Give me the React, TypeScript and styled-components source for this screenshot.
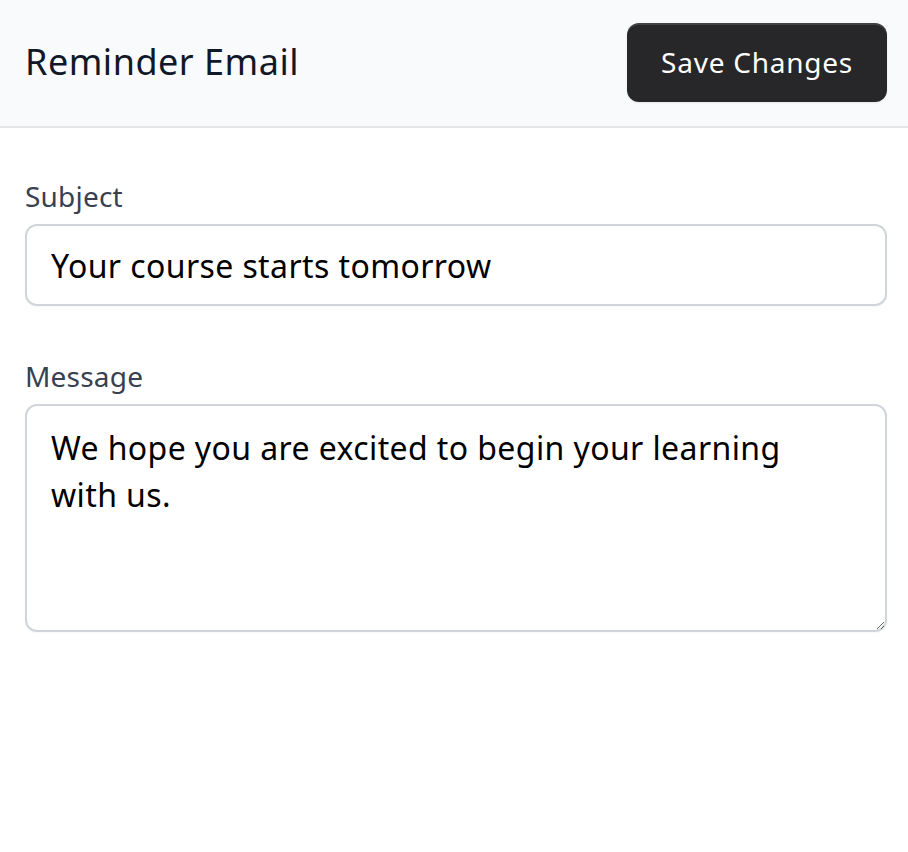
import React, { useState } from "react";
import styled, { createGlobalStyle } from "styled-components";

const GlobalStyle = createGlobalStyle`
  * {
    box-sizing: border-box;
  }

  body {
    margin: 0;
    background: #ffffff;
    font-family: "Noto Sans", "Open Sans", sans-serif;
  }
`;

const Page = styled.div`
  display: flex;
  flex-direction: column;
  width: 100%;
  min-height: 852px;
  background: #ffffff;
`;

const Header = styled.header`
  display: flex;
  align-items: center;
  justify-content: space-between;
  height: 128px;
  padding: 0 21px 2px 25px;
  background: #f9fafb;
  border-bottom: 2px solid #e5e7eb;
`;

const Title = styled.h1`
  margin: 0;
  font-size: 36px;
  font-weight: 400;
  line-height: 48px;
  letter-spacing: 0.5px;
  color: #111827;
`;

const SaveButton = styled.button`
  height: 79px;
  width: 260px;
  border: none;
  border-radius: 12px;
  background: #27272a;
  color: #ffffff;
  font-family: inherit;
  font-size: 28px;
  font-weight: 400;
  letter-spacing: 0.75px;
  box-shadow: inset 0 2px 0 rgba(255, 255, 255, 0.12),
    0 1px 2px rgba(0, 0, 0, 0.08);
  cursor: pointer;
`;

const Body = styled.main`
  display: flex;
  flex-direction: column;
  gap: 50px;
  padding: 48px 21px 0 25px;
`;

const Field = styled.div`
  display: flex;
  flex-direction: column;
  gap: 8px;
`;

const Label = styled.label`
  font-size: 28px;
  line-height: 40px;
  letter-spacing: 0.2px;
  color: #374151;
`;

const TextInput = styled.input`
  height: 82px;
  width: 100%;
  padding: 0 24px;
  border: 2px solid #d1d5db;
  border-radius: 12px;
  font-family: inherit;
  font-size: 32px;
  letter-spacing: 0.4px;
  color: #000000;
  background: #ffffff;
  box-shadow: 0 1px 2px rgba(0, 0, 0, 0.04);
  outline: none;
`;

const TextArea = styled.textarea`
  height: 228px;
  width: 100%;
  padding: 18px 48px 16px 24px;
  border: 2px solid #d1d5db;
  border-radius: 12px;
  font-family: inherit;
  font-size: 32px;
  line-height: 47px;
  letter-spacing: 0.4px;
  color: #000000;
  background: #ffffff;
  box-shadow: 0 1px 2px rgba(0, 0, 0, 0.04);
  outline: none;
  resize: vertical;
`;

export default function App() {
  const [subject, setSubject] = useState("Your course starts tomorrow");
  const [message, setMessage] = useState(
    "We hope you are excited to begin your learning with us."
  );

  return (
    <Page>
      <GlobalStyle />
      <Header>
        <Title>Reminder Email</Title>
        <SaveButton type="button">Save Changes</SaveButton>
      </Header>
      <Body>
        <Field>
          <Label htmlFor="subject">Subject</Label>
          <TextInput
            id="subject"
            value={subject}
            onChange={(e) => setSubject(e.target.value)}
          />
        </Field>
        <Field>
          <Label htmlFor="message">Message</Label>
          <TextArea
            id="message"
            value={message}
            onChange={(e) => setMessage(e.target.value)}
          />
        </Field>
      </Body>
    </Page>
  );
}
